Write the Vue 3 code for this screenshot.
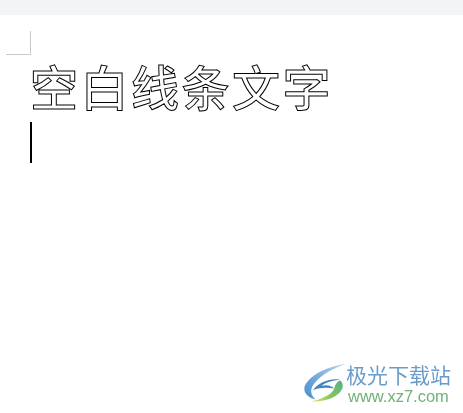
<script setup>
const title = '空白线条文字'
</script>

<template>
  <div class="app">
    <div class="topbar"></div>
    <main class="page">
      <div class="corner"></div>
      <h1 class="outline">{{ title }}</h1>
      <div class="caret"></div>
      <div class="mark">
        <svg class="logo" viewBox="30 40 130 120" width="43" height="40" aria-hidden="true">
          <defs>
            <linearGradient id="lg" x1="1" y1="0" x2="0" y2="1">
              <stop offset="0" stop-color="#4fb08a"/>
              <stop offset=".6" stop-color="#8cc65a"/>
              <stop offset="1" stop-color="#d8e27a"/>
            </linearGradient>
            <linearGradient id="lb" x1="1" y1="0" x2="0" y2="1">
              <stop offset="0" stop-color="#c3d8ea"/>
              <stop offset=".6" stop-color="#6ea6d8"/>
              <stop offset="1" stop-color="#4a8fcf"/>
            </linearGradient>
          </defs>
          <path d="M160 42C110 50 55 70 35 110C30 130 45 145 68 150C50 135 50 115 70 95C90 72 125 55 160 42Z" fill="url(#lb)"/>
          <path d="M60 122C78 96 115 84 142 90C120 92 98 98 86 108C102 104 118 108 124 117C102 113 80 114 60 122Z" fill="#3f86c6"/>
          <path d="M142 92C157 105 152 125 127 140C107 152 80 158 55 155C85 150 117 135 124 118C127 105 134 95 142 92Z" fill="url(#lg)"/>
        </svg>
        <div class="mark-text">
          <div class="mark-name">极光下载站</div>
          <div class="mark-url">www.xz7.com</div>
        </div>
      </div>
    </main>
  </div>
</template>

<style scoped>
.app {
  width: 463px;
  height: 413px;
  display: flex;
  flex-direction: column;
  background: #fff;
  overflow: hidden;
}
.topbar {
  height: 15px;
  flex: none;
  background: linear-gradient(#f2f3f5, #f4f5f7);
}
.page {
  position: relative;
  flex: 1;
  padding: 37px 0 0 30px;
}
.corner {
  position: absolute;
  left: 6px;
  top: 16px;
  width: 24px;
  height: 23px;
  border-right: 1px solid #c9c9c9;
  border-bottom: 1px solid #c9c9c9;
}
.outline {
  margin: 0;
  font: 500 48px/66px "Noto Sans CJK SC", sans-serif;
  letter-spacing: 2.5px;
  color: #fff;
  -webkit-text-stroke: 1px #000;
  white-space: nowrap;
  will-change: transform;
}
.caret {
  width: 2px;
  height: 41px;
  background: #000;
  margin-top: 4px;
}
.mark {
  position: absolute;
  left: 303px;
  top: 348px;
  display: flex;
  filter: blur(0.35px);
}
.logo {
  flex: none;
}
.mark-text {
  display: flex;
  flex-direction: column;
}
.mark-name {
  font: 400 21px/22px "Noto Sans CJK SC", sans-serif;
  color: #6a9ccb;
  white-space: nowrap;
}
.mark-url {
  font: 400 16.5px/20px "Liberation Sans", sans-serif;
  color: #6fb27a;
  white-space: nowrap;
  margin: 1px 0 0 2px;
}
</style>
